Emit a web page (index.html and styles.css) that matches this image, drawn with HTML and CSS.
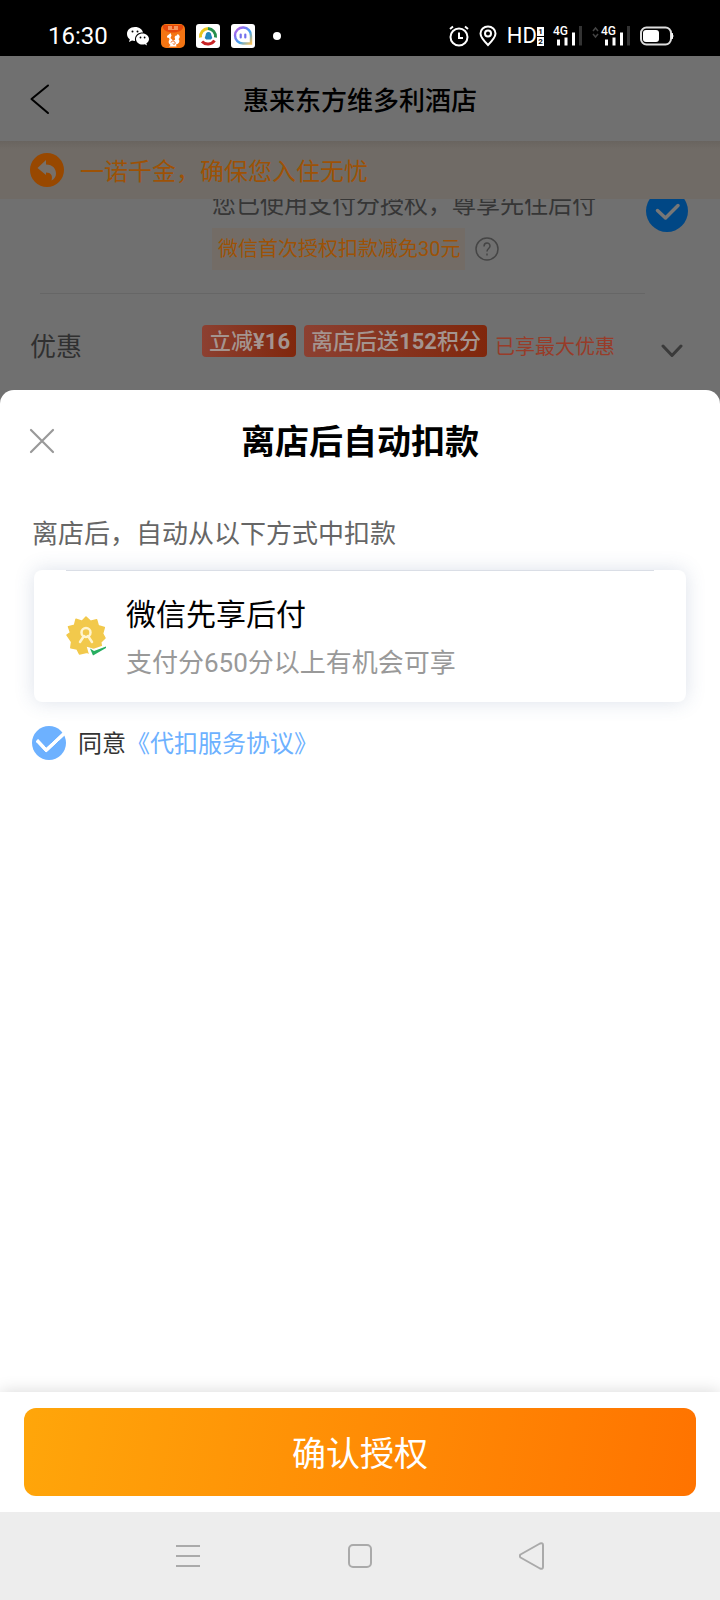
FILE: index.html
```html
<!DOCTYPE html>
<html lang="zh-CN">
<head>
<meta charset="utf-8">
<meta name="viewport" content="width=device-width, initial-scale=1">
<title>离店后自动扣款</title>
<link rel="stylesheet" href="styles.css">
</head>
<body>
<div class="screen">
  <header class="status">
    <div class="status-left">
      <time class="clock">16:30</time>
      <svg width="24" height="24" viewBox="0 0 24 24"><path fill="#fff" d="M9 3C4 3 1 6.200 1 10c0 2.200 1 4 2.800 5.200L3 18l3-1.500c1 .3 2 .5 3 .4C8.500 11 12 8.500 17 8.500 16.500 5.500 13.500 3 9 3z"/><path fill="#fff" d="M16.500 9.500c-3.700 0-6.500 2.500-6.500 5.500s2.800 5.600 6.500 5.600c.8 0 1.600-.1 2.300-.4L21 21.500l-.6-2.200c1.600-1 2.600-2.600 2.600-4.300 0-3-2.800-5.500-6.500-5.500z"/><g fill="#000"><circle cx="6.500" cy="7.500" r="1"/><circle cx="11.500" cy="7.500" r="1"/><circle cx="14.500" cy="13.500" r=".9"/><circle cx="18.600" cy="13.500" r=".9"/></g></svg>
      <svg width="24" height="24" viewBox="0 0 24 24"><rect width="24" height="24" rx="5" fill="#f47513"/><path d="M2 1h20v3c-3 6-17 6-20 0z" fill="#e64a0c"/><path d="M8 2v4M10 2v4M14 2v4M16 2v4M12 5v1" stroke="#ffe0b0" stroke-width="1"/><path fill="#fff" d="M6 12l2.500-2 1-1 1 2.500-1 2.500 2.500 2.500c1.500 0 2.500-.8 2-2-1-2 .5-3.500 2-3l.5-1.500c2.500 1 3 3.500 1 5 1.500 1.500 1 4-1 5l-1.500.5.500 2H8l1.500-1.500c-2-1.500-2.500-3.500-1-5.500L8 14l-2-.5z"/><path d="M10 18.500c.5-2 3.500-2 4 0s-1.500 2.500-2 1" fill="none" stroke="#ee6010" stroke-width="1"/></svg>
      <svg width="24" height="24" viewBox="0 0 24 24"><rect width="24" height="24" rx="3" fill="#fff"/><g fill="none" stroke-width="3"><path d="M4.500 13.500A8 8 0 0 1 12 4.500" stroke="#e9c71d"/><path d="M12 4.500a8 8 0 0 1 7.500 9" stroke="#27904c"/><path d="M18.500 16.500A8 8 0 0 1 6 17.500" stroke="#c82426"/></g><path d="M12.500 8c2 0 2.800 1.500 2.800 3l1 3-1.500 1.500h-4.600L8.700 14l1-3c0-1.500.8-3 2.800-3z" fill="#2387bb"/></svg>
      <svg width="24" height="24" viewBox="0 0 24 24"><defs><linearGradient id="chat" x1="0" y1="0" x2="1" y2="1"><stop stop-color="#c66be0"/><stop offset=".25" stop-color="#8a6df0"/><stop offset=".6" stop-color="#40a4ef"/><stop offset="1" stop-color="#f4c05a"/></linearGradient></defs><rect width="24" height="24" rx="3" fill="#fff"/><path d="M20 19.500V12A8 8 0 1 0 12 19.500z" fill="none" stroke="url(#chat)" stroke-width="2.400"/><path d="M9.700 10.500v3M14.300 10.500v3" stroke="#7370ed" stroke-width="2.200" stroke-linecap="round"/></svg>
      <i class="more-dot"></i>
    </div>
    <div class="status-right">
      <svg width="20" height="22" viewBox="0 0 20 22" fill="none" stroke="#fff" stroke-width="2"><circle cx="10" cy="12" r="8.500"/><path d="M10 7.500V13h4M1 4l3-2.500M19 4l-3-2.500"/></svg>
      <svg width="18" height="22" viewBox="0 0 18 22" fill="none" stroke="#fff" stroke-width="2"><path d="M9 20C5 16 1.500 12.500 1.500 8.500a7.500 7 0 0 1 15 0C16.500 12.500 13 16 9 20z"/><circle cx="9" cy="8.500" r="3"/></svg>
      <span class="hd">HD<span class="sims"><span>1</span><span>2</span></span></span>
      <span class="signal"><span>4G</span><svg width="28" height="20" viewBox="0 0 28 20"><path d="M4.500 19.500v-6M12 19.500v-8M19.500 19.500v-13" stroke="#fff" stroke-width="3"/><path d="M26.500 19.500V0" stroke="#333" stroke-width="3"/></svg></span>
      <span class="signal"><span>4G</span><svg width="38" height="20" viewBox="0 0 38 20"><path d="M1 5l2.500-3L6 5M1 8l2.500 3L6 8" fill="none" stroke="#444" stroke-width="1.500"/><path d="M14.500 19.500v-6M22 19.500v-8M29.500 19.500v-13" stroke="#fff" stroke-width="3"/><path d="M36.500 19.500V0" stroke="#333" stroke-width="3"/></svg></span>
      <svg width="34" height="20" viewBox="0 0 34 20"><rect x="1" y="1.500" width="30" height="17" rx="5.500" fill="none" stroke="#ddd" stroke-width="2"/><rect x="3" y="4" width="16" height="12" rx="3" fill="#fff"/><path d="M32 7q2 3 0 6z" fill="#fff" stroke="#fff"/></svg>
    </div>
  </header>

  <section class="page" aria-hidden="true">
    <div class="navbar">
      <button class="back" aria-label="返回"><svg width="20" height="32" viewBox="0 0 20 32" fill="none" stroke="#000" stroke-width="2" stroke-linecap="round" stroke-linejoin="round"><path d="M18 2.500L1.500 16 18 30"/></svg></button>
      <h2 class="hotel">惠来东方维多利酒店</h2>
    </div>
    <div class="promise">
      <svg width="34" height="34" viewBox="0 0 34 34"><circle cx="17" cy="17" r="17" fill="#984800"/><path d="M7.500 15L16 7v4.500c7 0 10 4.500 10 9 0 3-1.500 5.500-4.500 7 1.500-5-.5-8-5.500-8V22z" fill="#77706a"/></svg>
      <span class="promise-text">一诺千金，确保您入住无忧</span>
    </div>
    <div class="auth">
      <div class="auth-body">
        <p class="auth-text">您已使用支付分授权，尊享先住后付</p>
        <div class="auth-row">
          <span class="auth-tag">微信首次授权扣款减免30元</span>
          <svg width="24" height="24" viewBox="0 0 24 24" fill="none" stroke="#454545"><circle cx="12" cy="12" r="11" stroke-width="1.500"/><path d="M9 9.500C9 5 15 5 15 9c0 2.500-3 2.500-3 5.500M12 16.500v2" stroke-width="1.500"/></svg>
        </div>
      </div>
      <svg class="auth-check" width="42" height="42" viewBox="0 0 42 42"><circle cx="21" cy="21" r="21" fill="#004785"/><path d="M11.500 20.500l8 7.500L32 15.500" fill="none" stroke="#777" stroke-width="3.500" stroke-linecap="round" stroke-linejoin="round"/></svg>
    </div>
    <div class="offers">
      <span class="offers-label">优惠</span>
      <span class="badge">立减<b>¥16</b></span>
      <span class="badge">离店后送<b>152</b>积分</span>
      <span class="best">已享最大优惠</span>
      <svg class="chevron" width="22" height="14" viewBox="0 0 22 14" fill="none" stroke="#3a3a3a" stroke-width="3" stroke-linecap="round" stroke-linejoin="round"><path d="M2 2l9 9.500L20 2"/></svg>
    </div>
  </section>

  <main class="sheet" role="dialog" aria-labelledby="sheet-title">
    <div class="sheet-head">
      <button class="close" aria-label="关闭"><svg width="26" height="26" viewBox="0 0 26 26" stroke="#999" stroke-width="2.200" stroke-linecap="round"><path d="M2 2l22 22M24 2L2 24"/></svg></button>
      <h1 id="sheet-title">离店后自动扣款</h1>
    </div>
    <p class="hint">离店后，自动从以下方式中扣款</p>
    <div class="method">
      <svg width="40" height="40" viewBox="0 0 40 40"><path fill="#f2c94c" stroke="#f2c94c" stroke-width="1.500" stroke-linejoin="round" d="M20 1l4.600 4.300 6-1.500 1.700 6 6 1.700-1.700 6L39 22l-4.300 4.300 1.100 6-6.200 1.400-2.400 5.100-6.200-2.600L13.500 38l-2.500-5-6.200-1.200.8-6L1 19l3.500-2.500L2.500 10.700l6-1.500 1.500-6 6 2z"/><g fill="none" stroke="#fff5cf" stroke-width="2.500" stroke-linecap="round"><circle cx="20" cy="16.500" r="4.500"/><path d="M14 26l4-6M26 26l-4-6"/></g><path d="M23 33l4.500 1.500L40 30v10H25z" fill="#fff" stroke="#fff" stroke-width="3"/><path d="M24 32.500l4 2.500L40 30.500v1.500L27 39.500z" fill="#27ae60"/></svg>
      <div>
        <h2 class="method-name">微信先享后付</h2>
        <p class="method-note">支付分650分以上有机会可享</p>
      </div>
    </div>
    <div class="agree">
      <input class="agree-box" type="checkbox" id="agree" checked>
      <label for="agree">同意</label><a href="#">《代扣服务协议》</a>
    </div>
  </main>

  <footer class="actions"><button class="confirm">确认授权</button></footer>

  <nav class="sysnav">
    <button aria-label="菜单"><svg width="26" height="28" viewBox="0 0 26 28" stroke="#aaa" stroke-width="2"><path d="M1 4h24M1 14h24M1 24h24"/></svg></button>
    <button aria-label="主页"><svg width="26" height="28" viewBox="0 0 26 28" fill="none" stroke="#aaa" stroke-width="2"><rect x="2" y="3" width="22" height="22" rx="4"/></svg></button>
    <button aria-label="返回上一级"><svg width="26" height="28" viewBox="0 0 26 28" fill="none" stroke="#aaa" stroke-width="2" stroke-linejoin="round"><path d="M1.500 12.500L21 1.500q3-1 3 1.500v22q0 2.500-3 1.500L1.500 15.500q-1.500-1.500 0-3z"/></svg></button>
  </nav>
</div>
</body>
</html>
```

FILE: styles.css
```css
* { box-sizing: border-box; }
body, h1, h2, p { margin: 0; }
body { font-family: Roboto, "Noto Sans CJK SC", sans-serif; background: #fff; color: #000; }
button { border: 0; padding: 0; background: none; font: inherit; color: inherit; }
svg { display: block; flex: none; }

.screen { min-height: 100vh; display: flex; flex-direction: column; background: #707070; }

/* System status bar */
.status { display: flex; justify-content: space-between; align-items: center; height: 56px; padding: 16px 46px 0 48px; background: #000; color: #fff; }
.status-left, .status-right { display: flex; align-items: center; }
.status-left { gap: 11px; }
.status-right { gap: 10px; }
.clock { font-size: 24px; line-height: 24px; margin-right: 7px; }
.more-dot { width: 8px; height: 8px; margin-left: 7px; border-radius: 50%; background: #fff; }
.hd { display: flex; align-items: center; font-size: 22px; font-weight: 400; line-height: 22px; }
.sims { display: flex; flex-direction: column; gap: 1px; }
.sims span { width: 7px; height: 9px; background: #fff; color: #000; font-size: 8px; font-weight: 700; line-height: 9px; text-align: center; }
.signal { position: relative; }
.signal span { position: absolute; right: 14px; top: -2px; font-size: 12px; line-height: 14px; font-weight: 500; }

/* Dimmed page behind the sheet */
.page { overflow: hidden; }
.navbar { display: grid; grid-template-columns: 60px 1fr 60px; align-items: center; height: 85px; }
.back { padding-left: 30px; }
.hotel { padding-top: 4px; font-size: 26px; line-height: 36px; font-weight: 500; text-align: center; }
.promise { display: flex; align-items: center; gap: 16px; height: 58px; padding: 0 30px; background: linear-gradient(#69645f, #706b66 8px); color: #9d5206; font-size: 24px; line-height: 34px; }
.promise-text { padding-top: 4px; }
.auth { display: flex; justify-content: space-between; height: 95px; margin: 0 32px 0 40px; overflow: hidden; }
.auth-body { flex: 1; margin-right: 1px; padding-left: 172px; border-bottom: 1px solid #666; }
.auth-text { margin-top: -12px; height: 41px; font-size: 24px; line-height: 36px; color: #363636; white-space: nowrap; }
.auth-row { display: flex; align-items: center; gap: 10px; }
.auth-tag { padding: 1px 5px 0 6px; line-height: 41px; font-size: 20px; color: #9d5206; background: #736c66; white-space: nowrap; }
.auth-check { margin-top: -9px; }
.offers { display: flex; align-items: center; height: 96px; padding: 0 37px 0 30px; }
.offers-label { width: 172px; font-size: 26px; line-height: 36px; color: #303030; margin-top: 10px; }
.badge { margin: -2px 8px 0 0; padding: 2px 6px 0 7px; border-radius: 4px; background: linear-gradient(90deg, #8c4031, #80270c); color: #a4948f; font-size: 22px; line-height: 30px; font-weight: 500; white-space: nowrap; }
.best { font-size: 20px; line-height: 30px; color: #983c29; margin-top: 10px; white-space: nowrap; }
.chevron { margin: 18px 0 0 auto; }

/* Bottom sheet */
.sheet { flex: 1; padding: 0 34px; border-radius: 14px 14px 0 0; background: #fff; }
.sheet-head { display: grid; grid-template-columns: 40px 1fr 40px; align-items: center; height: 102px; margin: 0 -5px; }
.sheet-head h1 { padding-top: 2px; font-size: 34px; line-height: 48px; font-weight: 700; text-align: center; }
.hint { margin: 24px -2px 18px; font-size: 26px; line-height: 36px; color: #666; }
.method { display: flex; align-items: center; gap: 20px; height: 132px; padding: 0 32px; border-radius: 8px; background: linear-gradient(#dadee6, #dadee6) center top / calc(100% - 64px) 1px no-repeat #fff; box-shadow: 0 0 20px rgba(60, 90, 140, .18); }
.method-name { padding-top: 2px; font-size: 30px; line-height: 44px; font-weight: 400; }
.method-note { margin-top: 8px; font-size: 26px; line-height: 36px; color: #999; }
.agree { display: flex; align-items: center; margin: 22px 0 0 -2px; font-size: 24px; line-height: 34px; color: #333; }
.agree label, .agree a { padding-top: 3px; }
.agree-box { appearance: none; width: 34px; height: 34px; margin: 0 12px 0 0; border-radius: 50%; background: #6db1ff; display: grid; place-items: center; }
.agree-box:checked::before { content: ""; width: 23px; height: 12px; margin: -9px 0 0 2px; border: solid #fff; border-width: 0 0 4px 4px; border-radius: 2px; transform: rotate(-43deg); }
.agree a { color: #6db1ff; text-decoration: none; }

/* Footer action and system navigation */
.actions { padding: 16px 24px; background: #fff; box-shadow: 0 0 16px rgba(0, 0, 0, .16); }
.confirm { display: block; width: 100%; height: 88px; padding-top: 3px; border-radius: 12px; background: linear-gradient(100deg, #ffa60a, #ff7300); color: #fff; font-size: 34px; line-height: 48px; }
.sysnav { display: flex; justify-content: space-between; height: 88px; padding: 0 175px; background: #ededed; }
```
